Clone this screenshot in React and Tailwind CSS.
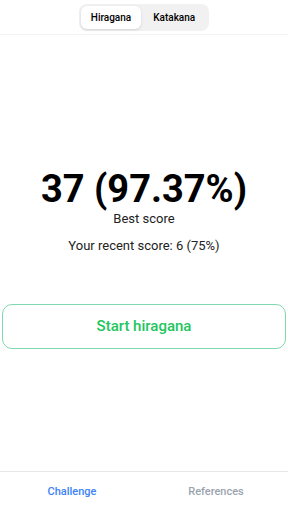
export default function App() {
  return (
    <div className="flex h-[512px] w-[288px] flex-col bg-white font-['Roboto',sans-serif]">
      {/* Header tabs */}
      <div className="flex h-[35px] justify-center border-b border-gray-100 pt-[4px]">
        <div className="flex h-[27px] items-center rounded-lg bg-[#f1f1f1] px-[2px]">
          <button className="h-[23px] rounded-md bg-white px-[10px] text-[10px] font-medium text-black shadow-sm">
            Hiragana
          </button>
          <button className="h-[23px] px-[12px] text-[10px] font-medium text-black">Katakana</button>
        </div>
      </div>

      {/* Scores */}
      <div className="flex flex-1 flex-col items-center">
        <div className="mt-[130px] text-[38px] font-bold leading-[48px] text-black">37 (97.37%)</div>
        <div className="mt-[-2px] text-[13px] leading-[16px] text-[#222]">Best score</div>
        <div className="mt-[11px] text-[13px] leading-[16px] text-[#222]">Your recent score: 6 (75%)</div>

        <button className="mt-[50px] flex h-[45px] w-[284px] items-center justify-center rounded-[10px] border border-[#7fd9b0] text-[15px] font-medium text-[#22c55e]">
          Start hiragana
        </button>
      </div>

      {/* Bottom nav */}
      <div className="flex h-[41px] border-t border-gray-200">
        <div className="flex flex-1 items-center justify-center text-[11px] font-medium text-[#3b82f6]">Challenge</div>
        <div className="flex flex-1 items-center justify-center text-[11px] font-medium text-[#9ca3af]">References</div>
      </div>
    </div>
  );
}
